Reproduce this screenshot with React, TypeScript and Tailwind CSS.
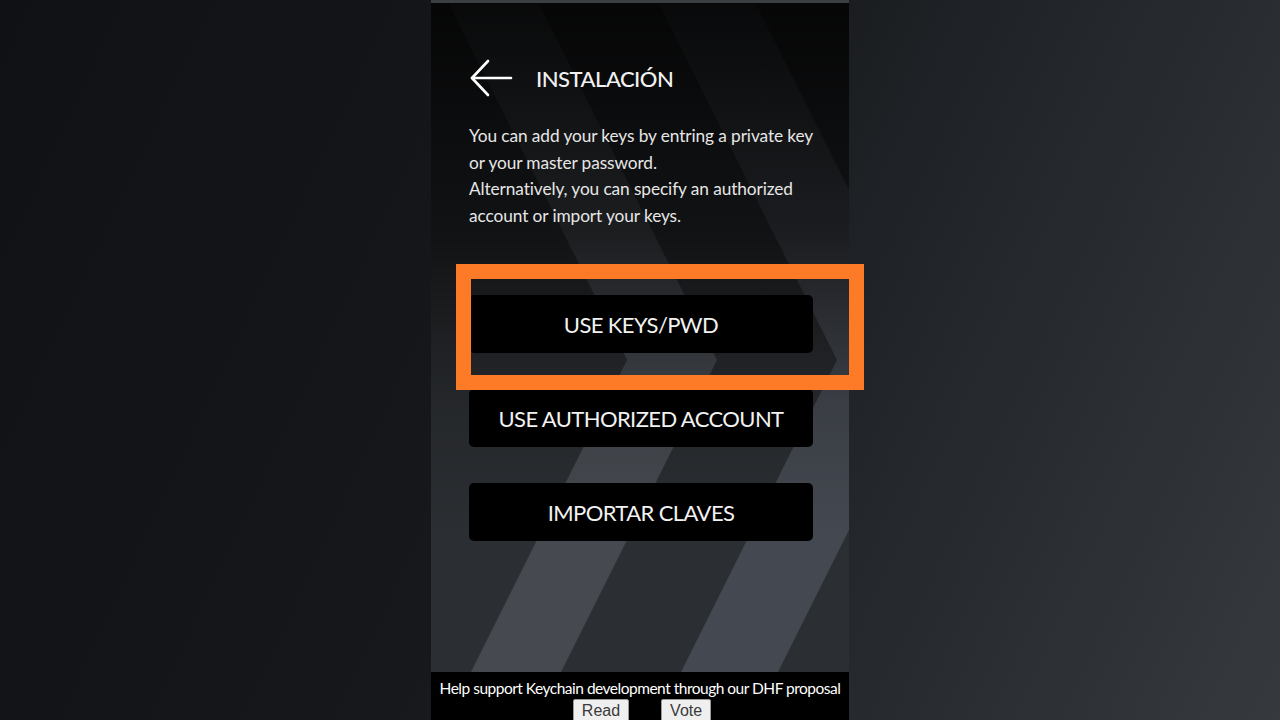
const BUTTONS = ["USE KEYS/PWD", "USE AUTHORIZED ACCOUNT", "IMPORTAR CLAVES"];

function Stripes() {
  // chevron stripes drawn behind the panel content
  return (
    <svg
      className="absolute inset-0 h-full w-full"
      viewBox="0 0 418 672"
      preserveAspectRatio="none"
    >
      <defs>
        <linearGradient id="shade" x1="0" y1="0" x2="0" y2="1">
          <stop offset="0" stopColor="#000" stopOpacity="0.88" />
          <stop offset="0.35" stopColor="#000" stopOpacity="0.6" />
          <stop offset="0.6" stopColor="#000" stopOpacity="0.15" />
          <stop offset="0.8" stopColor="#000" stopOpacity="0" />
        </linearGradient>
      </defs>
      <rect width="418" height="672" fill="#2b2e32" />
      <polygon points="16,0 106,0 286,360 130,672 40,672 196,360" fill="#464a50" />
      <polygon points="226,0 323,0 503,360 347,672 250,672 406,360" fill="#444850" />
      <rect width="418" height="672" fill="url(#shade)" />
    </svg>
  );
}

function BackArrow() {
  return (
    <svg width="44" height="40" viewBox="0 0 44 40" fill="none" stroke="#fff" strokeWidth="2.6" strokeLinecap="round" strokeLinejoin="round">
      <path d="M42 20H3" />
      <path d="M19 3L3 20L19 37" />
    </svg>
  );
}

export default function App() {
  return (
    <div
      className="flex h-[720px] w-full justify-center overflow-hidden bg-[linear-gradient(115deg,#101114_0%,#16181b_45%,#2a2e33_80%,#363a3f_100%)]"
      style={{ fontFamily: "Lato, 'Liberation Sans', sans-serif" }}
    >
      <div className="relative flex h-[720px] w-[418px] flex-col">
        <div className="relative flex-1">
          <Stripes />
          <div className="relative h-[3px] bg-[#3b3e42]" />
          <div className="relative flex flex-col px-[38px] pt-[55px]">
            <div className="flex h-[40px] items-center">
              <BackArrow />
              <h1 className="ml-[23px] text-[22px] font-medium tracking-[-0.5px] text-[#f1f1f1]">
                INSTALACIÓN
              </h1>
            </div>
            <p className="mt-[25px] whitespace-nowrap text-[17.3px] leading-[26.5px] tracking-[-0.1px] text-[#e6e6e6]">
              <span className="block">You can add your keys by entring a private key</span>
              <span className="block">or your master password.</span>
              <span className="block">Alternatively, you can specify an authorized</span>
              <span className="block">account or import your keys.</span>
            </p>
            <div className="mt-[66px] flex flex-col gap-[36px]">
              {BUTTONS.map((label) => (
                <button
                  key={label}
                  className="h-[58px] w-[344px] rounded-[5px] bg-black text-[22px] tracking-[-0.6px] text-[#f2f2f2]"
                >
                  {label}
                </button>
              ))}
            </div>
          </div>
        </div>
        <footer className="h-[48px] shrink-0 bg-black pt-[6px] text-center">
          <p className="text-[15.5px] leading-[20px] tracking-[-0.5px] text-white">
            Help support Keychain development through our DHF proposal
          </p>
          <div className="mt-[1px] flex justify-center gap-[32px] pl-[4px]">
            <button
              className="rounded-[2px] border border-[#9a9a9a] bg-[#efefef] px-[8px] text-[16px] leading-[22px] text-[#3a3a3a]"
              style={{ fontFamily: "'Liberation Sans', Arial, sans-serif" }}
            >
              Read
            </button>
            <button
              className="rounded-[2px] border border-[#9a9a9a] bg-[#efefef] px-[8px] text-[16px] leading-[22px] text-[#3a3a3a]"
              style={{ fontFamily: "'Liberation Sans', Arial, sans-serif" }}
            >
              Vote
            </button>
          </div>
        </footer>
        <div className="pointer-events-none absolute left-[25px] top-[264px] h-[126px] w-[408px] border-[15px] border-[#fd7a26]" />
      </div>
    </div>
  );
}
